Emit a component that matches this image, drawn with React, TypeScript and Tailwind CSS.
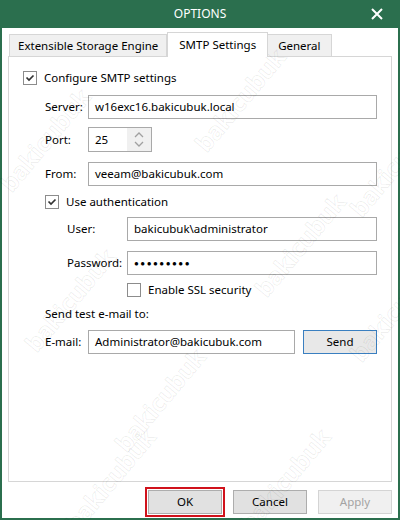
import React from 'react';

const font = { fontFamily: '"Noto Sans", "Open Sans", Arial, sans-serif' };

// faint watermark spots over the dialog
const marks = [
  { x: 45, y: 140 },
  { x: 240, y: 100 },
  { x: 395, y: 165 },
  { x: 70, y: 300 },
  { x: 300, y: 245 },
  { x: 395, y: 310 },
  { x: 160, y: 400 },
  { x: 110, y: 480 },
  { x: 285, y: 480 },
];

function Check({ checked }: { checked: boolean }) {
  return (
    <div className="w-[14px] h-[14px] border border-[#8c8c8c] bg-white flex items-center justify-center shrink-0">
      {checked && (
        <svg width="10" height="10" viewBox="0 0 10 10">
          <path d="M1.5 4.5 L4 7 L8.5 2.5" fill="none" stroke="#333" strokeWidth="1.7" />
        </svg>
      )}
    </div>
  );
}

function Field({ value, className = '' }: { value: string; className?: string }) {
  return (
    <div className={`h-[24px] border border-[#a9a9a9] bg-white flex items-center px-[6px] text-black ${className}`}>
      {value}
    </div>
  );
}

export default function App() {
  return (
    <div className="relative w-[400px] h-[520px] overflow-hidden bg-[#2b6f4e] flex flex-col text-[11.5px]" style={font}>
      <div className="h-[28px] relative flex items-center justify-center text-white text-[12px]">
        OPTIONS
        <svg className="absolute right-[17px] top-[8px]" width="12" height="12" viewBox="0 0 12 12">
          <path d="M1 1 L11 11 M11 1 L1 11" stroke="white" strokeWidth="2" />
        </svg>
      </div>
      <div className="flex-1 bg-white mx-[2px] mb-[2px] flex flex-col px-[6px]">
        <div className="flex items-end mt-[3px] h-[25px] pl-[1px]">
          <div className="h-[22px] px-[8px] flex items-center bg-[#f0f0f0] border border-[#d6d6d6] border-b-0 text-black">
            Extensible Storage Engine
          </div>
          <div className="h-[25px] px-[11px] flex items-center bg-white border border-[#d6d6d6] border-b-0 -mb-[1px] relative z-10 text-black">
            SMTP Settings
          </div>
          <div className="h-[22px] px-[10px] flex items-center bg-[#f0f0f0] border border-[#d6d6d6] border-b-0 border-l-0 text-black">
            General
          </div>
        </div>
        <div className="h-[426px] border border-[#d6d6d6] flex flex-col pl-[14px] pr-[14px] pt-[13px] text-black">
          <div className="flex items-center gap-[7px] h-[16px]">
            <Check checked />
            <span>Configure SMTP settings</span>
          </div>
          <div className="flex items-center mt-[9px] pl-[22px]">
            <span className="w-[43px]">Server:</span>
            <Field className="flex-1" value="w16exc16.bakicubuk.local" />
          </div>
          <div className="flex items-center mt-[8px] pl-[22px]">
            <span className="w-[43px]">Port:</span>
            <div className="h-[25px] w-[64px] border border-[#a9a9a9] bg-white flex">
              <div className="flex-1 flex items-center px-[6px]">25</div>
              <div className="w-[24px] bg-[#f0f0f0] flex flex-col items-center justify-center gap-[3px]">
                <svg width="10" height="6" viewBox="0 0 10 6">
                  <path d="M1 5 L5 1 L9 5" fill="none" stroke="#a0a0a0" strokeWidth="1.3" />
                </svg>
                <svg width="10" height="6" viewBox="0 0 10 6">
                  <path d="M1 1 L5 5 L9 1" fill="none" stroke="#a0a0a0" strokeWidth="1.3" />
                </svg>
              </div>
            </div>
          </div>
          <div className="flex items-center mt-[10px] pl-[22px]">
            <span className="w-[43px]">From:</span>
            <Field className="flex-1" value="veeam@bakicubuk.com" />
          </div>
          <div className="flex items-center gap-[7px] h-[16px] mt-[8px] pl-[22px]">
            <Check checked />
            <span>Use authentication</span>
          </div>
          <div className="flex items-center mt-[7px] pl-[44px]">
            <span className="w-[60px]">User:</span>
            <Field className="flex-1" value="bakicubuk\administrator" />
          </div>
          <div className="flex items-center mt-[10px] pl-[44px]">
            <span className="w-[60px]">Password:</span>
            <Field className="flex-1 text-[8px] tracking-[1.5px]" value="●●●●●●●●●" />
          </div>
          <div className="flex items-center gap-[7px] h-[16px] mt-[7px] pl-[104px]">
            <Check checked={false} />
            <span>Enable SSL security</span>
          </div>
          <div className="h-[16px] flex items-center mt-[8px] pl-[22px]">Send test e-mail to:</div>
          <div className="flex items-center mt-[8px] pl-[22px]">
            <span className="w-[43px]">E-mail:</span>
            <Field className="w-[207px]" value="Administrator@bakicubuk.com" />
            <div className="ml-[8px] flex-1 h-[24px] border border-[#3a7fc0] bg-[#e8e8e8] flex items-center justify-center">
              Send
            </div>
          </div>
        </div>
        <div className="flex justify-end gap-[11px] mt-[8px]">
          <div className="outline-2 outline-[#d0121b] outline-offset-[1px] w-[74px] h-[24px] border border-[#adadad] bg-[#e1e1e1] flex items-center justify-center text-black">
            OK
          </div>
          <div className="w-[74px] h-[24px] border border-[#adadad] bg-[#e1e1e1] flex items-center justify-center text-black">
            Cancel
          </div>
          <div className="w-[74px] h-[24px] border border-[#d4d4d4] bg-[#f0f0f0] flex items-center justify-center text-[#a3a3a3]">
            Apply
          </div>
        </div>
      </div>
      {marks.map((m, i) => (
        <div
          key={i}
          className="absolute pointer-events-none text-[24px] font-bold text-transparent [-webkit-text-stroke:1px_rgba(0,0,0,0.07)] -rotate-[50deg] -translate-x-1/2 -translate-y-1/2"
          style={{ left: m.x, top: m.y }}
        >
          bakicubuk
        </div>
      ))}
    </div>
  );
}
